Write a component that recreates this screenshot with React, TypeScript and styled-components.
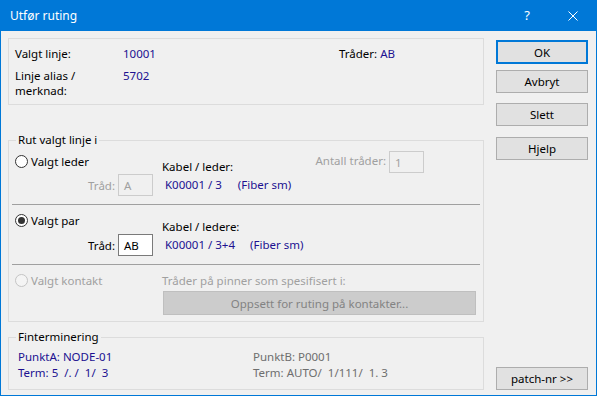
import styled, { createGlobalStyle } from "styled-components";

const GlobalStyle = createGlobalStyle`
  html, body {
    margin: 0;
    padding: 0;
    background: #f0f0f0;
  }
  body {
    font-family: "Noto Sans", "Liberation Sans", Arial, sans-serif;
    font-size: 11.5px;
    line-height: 15px;
    color: #000;
  }
`;

const VALUE = "#201090";
const DISABLED = "#a0a0a0";

const Window = styled.div`
  width: 597px;
  height: 396px;
  box-sizing: border-box;
  border: 1px solid #0078d7;
  border-top: 0;
  background: #f0f0f0;
  display: flex;
  flex-direction: column;
`;

const TitleBar = styled.div`
  height: 31px;
  flex: none;
  background: #0078d7;
  color: #fff;
  display: flex;
  align-items: center;
  padding-left: 9px;
`;

const Title = styled.div`
  flex: 1;
  font-size: 12px;
`;

const TitleButton = styled.div`
  width: 46px;
  height: 31px;
  display: flex;
  align-items: center;
  justify-content: center;
  font-size: 13px;
`;

const Body = styled.div`
  flex: 1;
  display: flex;
  gap: 12px;
  padding: 7px 8px 6px 7px;
`;

const MainColumn = styled.div`
  width: 476px;
  display: flex;
  flex-direction: column;
`;

const ButtonColumn = styled.div`
  width: 92px;
  display: flex;
  flex-direction: column;
  padding-top: 2px;
`;

const InfoBox = styled.div`
  height: 67px;
  box-sizing: border-box;
  border: 1px solid #dcdcdc;
  display: grid;
  grid-template-columns: 108px 216px auto;
  grid-template-rows: 15px 30px;
  row-gap: 7px;
  padding: 7px 0 0 6px;
`;

const Value = styled.span<{ $muted?: boolean }>`
  color: ${(p) => (p.$muted ? "#6e6e6e" : VALUE)};
  white-space: pre;
`;

const Group = styled.fieldset<{ $top: number }>`
  margin: ${(p) => p.$top}px 0 0 0;
  padding: 0;
  border: 1px solid #dcdcdc;
  min-width: 0;
`;

const Legend = styled.legend`
  margin-left: 7px;
  padding: 0 2px;
  line-height: 14px;
`;

const Section = styled.div<{ $pt: number; $pb: number }>`
  display: grid;
  grid-template-columns: 150px 1fr;
  padding: ${(p) => p.$pt}px 3px ${(p) => p.$pb}px 3px;
`;

const LeftCol = styled.div<{ $top: number; $gap: number }>`
  display: flex;
  flex-direction: column;
  padding-top: ${(p) => p.$top}px;
  gap: ${(p) => p.$gap}px;
`;

const RightCol = styled.div`
  display: flex;
  align-items: flex-start;
`;

const Separator = styled.div`
  height: 1px;
  margin: 0 3px;
  background: #a0a0a0;
`;

const RadioRow = styled.div<{ $disabled?: boolean }>`
  display: flex;
  align-items: center;
  gap: 3px;
  padding-left: 3px;
  color: ${(p) => (p.$disabled ? DISABLED : "#000")};
`;

const RadioCircle = styled.span<{ $checked?: boolean; $disabled?: boolean }>`
  width: 13px;
  height: 13px;
  box-sizing: border-box;
  border-radius: 50%;
  border: 1px solid ${(p) => (p.$disabled ? "#c4c4c4" : "#333")};
  background: ${(p) => (p.$disabled ? "#f4f4f4" : "#fff")};
  display: flex;
  align-items: center;
  justify-content: center;

  &::after {
    content: "";
    width: 7px;
    height: 7px;
    border-radius: 50%;
    background: #333;
    display: ${(p) => (p.$checked ? "block" : "none")};
  }
`;

const FieldRow = styled.div<{ $disabled?: boolean }>`
  display: flex;
  align-items: center;
  justify-content: flex-end;
  gap: 3px;
  padding-right: 9px;
  color: ${(p) => (p.$disabled ? DISABLED : "#000")};
`;

const TextBox = styled.div<{ $disabled?: boolean }>`
  width: 35px;
  height: 22px;
  box-sizing: border-box;
  border: 1px solid ${(p) => (p.$disabled ? "#cccccc" : "#7a7a7a")};
  background: ${(p) => (p.$disabled ? "#f0f0f0" : "#fff")};
  color: ${(p) => (p.$disabled ? DISABLED : "#000")};
  padding-left: 5px;
  display: flex;
  align-items: center;
`;

const CableInfo = styled.div<{ $top: number }>`
  display: flex;
  flex-direction: column;
  gap: 3px;
  padding-top: ${(p) => p.$top}px;
`;

const CableValue = styled.div`
  padding-left: 3px;
  color: ${VALUE};
  display: flex;
`;

const Fiber = styled.span<{ $gap: number }>`
  margin-left: ${(p) => p.$gap}px;
`;

const CountField = styled.div`
  margin-left: auto;
  margin-right: 56px;
  display: flex;
  align-items: flex-start;
  gap: 3px;
  color: ${DISABLED};
`;

const CountLabel = styled.span`
  padding-top: 2px;
`;

const ContactCol = styled.div`
  display: flex;
  flex-direction: column;
  color: ${DISABLED};
`;

const WideButton = styled.div`
  margin: 3px 0 0 1px;
  width: 313px;
  height: 24px;
  box-sizing: border-box;
  background: #cccccc;
  border: 1px solid #bfbfbf;
  color: #838383;
  display: flex;
  align-items: center;
  justify-content: center;
`;

const TermGrid = styled.div`
  display: grid;
  grid-template-columns: 235px 1fr;
  line-height: 16px;
  padding: 5px 0 8px 9px;
`;

const DialogButton = styled.button<{ $default?: boolean; $top: number | "auto" }>`
  width: 92px;
  height: ${(p) => (p.$default ? 24 : 23)}px;
  margin-top: ${(p) => (p.$top === "auto" ? "auto" : `${p.$top}px`)};
  box-sizing: border-box;
  padding: 0;
  background: #e1e1e1;
  border: ${(p) => (p.$default ? "2px solid #0078d7" : "1px solid #adadad")};
  font: inherit;
  color: #000;
`;

const CloseIcon = () => (
  <svg width="10" height="10" viewBox="0 0 10 10">
    <path d="M0.5 0.5 L9.5 9.5 M9.5 0.5 L0.5 9.5" stroke="#fff" strokeWidth="1" />
  </svg>
);

export default function App() {
  return (
    <>
      <GlobalStyle />
      <Window>
        <TitleBar>
          <Title>Utfør ruting</Title>
          <TitleButton>?</TitleButton>
          <TitleButton>
            <CloseIcon />
          </TitleButton>
        </TitleBar>
        <Body>
          <MainColumn>
            <InfoBox>
              <span>Valgt linje:</span>
              <Value>10001</Value>
              <span>
                Tråder: <Value>AB</Value>
              </span>
              <span>
                Linje alias /
                <br />
                merknad:
              </span>
              <Value>5702</Value>
            </InfoBox>

            <Group $top={28}>
              <Legend>Rut valgt linje i</Legend>
              <Section $pt={4} $pb={8}>
                <LeftCol $top={3} $gap={5}>
                  <RadioRow>
                    <RadioCircle />
                    Valgt leder
                  </RadioRow>
                  <FieldRow $disabled>
                    Tråd:
                    <TextBox $disabled>A</TextBox>
                  </FieldRow>
                </LeftCol>
                <RightCol>
                  <CableInfo $top={8}>
                    <span>Kabel / leder:</span>
                    <CableValue>
                      K00001 / 3<Fiber $gap={16}>(Fiber sm)</Fiber>
                    </CableValue>
                  </CableInfo>
                  <CountField>
                    <CountLabel>Antall tråder:</CountLabel>
                    <TextBox $disabled>1</TextBox>
                  </CountField>
                </RightCol>
              </Section>
              <Separator />
              <Section $pt={8} $pb={8}>
                <LeftCol $top={0} $gap={6}>
                  <RadioRow>
                    <RadioCircle $checked />
                    Valgt par
                  </RadioRow>
                  <FieldRow>
                    Tråd:
                    <TextBox>AB</TextBox>
                  </FieldRow>
                </LeftCol>
                <RightCol>
                  <CableInfo $top={6}>
                    <span>Kabel / ledere:</span>
                    <CableValue>
                      K00001 / 3+4<Fiber $gap={15}>(Fiber sm)</Fiber>
                    </CableValue>
                  </CableInfo>
                </RightCol>
              </Section>
              <Separator />
              <Section $pt={8} $pb={6}>
                <LeftCol $top={0} $gap={0}>
                  <RadioRow $disabled>
                    <RadioCircle $disabled />
                    Valgt kontakt
                  </RadioRow>
                </LeftCol>
                <ContactCol>
                  <span>Tråder på pinner som spesifisert i:</span>
                  <WideButton>Oppsett for ruting på kontakter...</WideButton>
                </ContactCol>
              </Section>
            </Group>

            <Group $top={8}>
              <Legend>Finterminering</Legend>
              <TermGrid>
                <Value>PunktA: NODE-01</Value>
                <Value $muted>PunktB: P0001</Value>
                <Value>{"Term: 5  /. /  1/  3"}</Value>
                <Value $muted>{"Term: AUTO/  1/111/  1. 3"}</Value>
              </TermGrid>
            </Group>
          </MainColumn>

          <ButtonColumn>
            <DialogButton $default $top={0}>
              OK
            </DialogButton>
            <DialogButton $top={6}>Avbryt</DialogButton>
            <DialogButton $top={10}>Slett</DialogButton>
            <DialogButton $top={11}>Hjelp</DialogButton>
            <DialogButton $top="auto">patch-nr &gt;&gt;</DialogButton>
          </ButtonColumn>
        </Body>
      </Window>
    </>
  );
}
